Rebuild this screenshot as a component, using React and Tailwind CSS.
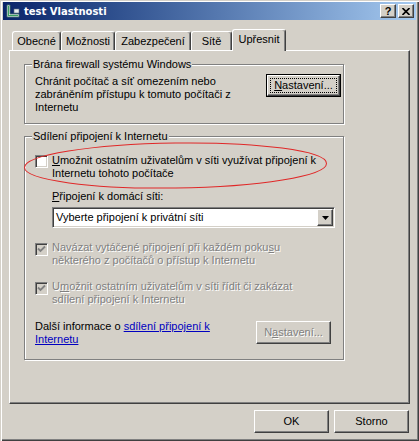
import React from 'react';

const raised =
  'border border-t-white border-l-white border-r-[#404040] border-b-[#404040] shadow-[inset_-1px_-1px_0_#808080]';
const sunken =
  'border border-t-[#808080] border-l-[#808080] border-r-white border-b-white shadow-[inset_1px_1px_0_#404040,inset_-1px_-1px_0_#d4d0c8]';
const dim = 'text-[#808080] [text-shadow:1px_1px_0_#fff]';

const Tab = ({ label, width, active }) => (
  <div
    className={`flex items-center justify-center rounded-t-[3px] border-l border-t border-white border-r border-r-[#404040] shadow-[inset_-1px_0_0_#808080] bg-[#d4d0c8] ${
      active ? 'relative z-10 h-[22px] pb-[2px]' : 'h-[19px] mb-[1px]'
    }`}
    style={{ width }}
  >
    {label}
  </div>
);

const Check = ({ checked, disabled }) => (
  <div
    className={`w-[13px] h-[13px] shrink-0 flex items-center justify-center ${sunken} ${
      disabled ? 'bg-[#d4d0c8]' : 'bg-white'
    }`}
  >
    {checked && (
      <svg width="9" height="9" viewBox="0 0 9 9">
        <path d="M1 3.5 L3.5 6 L8 1.5" fill="none" stroke="#808080" strokeWidth="1.8" />
      </svg>
    )}
  </div>
);

const Button = ({ children, disabled, isDefault, className = '' }) => {
  if (isDefault) {
    return (
      <div className={`w-[75px] h-[23px] border border-black ${className}`}>
        <div className={`w-full h-full p-[2px] ${raised}`}>
          <div className="w-full h-full border border-dotted border-black flex items-center justify-center">
            {children}
          </div>
        </div>
      </div>
    );
  }
  return (
    <div
      className={`w-[75px] h-[23px] flex items-center justify-center ${raised} ${
        disabled ? dim : ''
      } ${className}`}
    >
      {children}
    </div>
  );
};

const Group = ({ title, className = '', children }) => (
  <div
    className={`relative border border-[#808080] shadow-[inset_1px_1px_0_#fff,1px_1px_0_#fff] ${className}`}
  >
    <span className="absolute -top-[7px] left-[7px] bg-[#d4d0c8] px-[1px]">{title}</span>
    {children}
  </div>
);

export default function App() {
  return (
    <div className="relative w-[419px] h-[441px] overflow-hidden bg-[#d4d0c8] text-black text-[11px] leading-[13px] font-['Liberation_Sans',Arial,sans-serif] shadow-[inset_1px_1px_0_#d4d0c8,inset_2px_2px_0_#fff,inset_-1px_-1px_0_#404040,inset_-2px_-2px_0_#808080] flex flex-col">
      {/* title bar */}
      <div className="mt-[2px] ml-[3px] w-[413px] h-[18px] flex items-center bg-gradient-to-r from-[#0a246a] to-[#a6caf0]">
        <svg width="16" height="16" viewBox="0 0 16 16" className="ml-[2px]">
          <path d="M2 2 L5 2 L5 11 L14 11 L14 14 L2 14 Z" fill="#d8e4e4" stroke="#4a7a6a" strokeWidth="0.8" />
          <path d="M3 3 L4 3 L4 12 L13 12 L13 13 L3 13 Z" fill="#3aa060" />
          <rect x="9" y="6" width="5" height="4" fill="#e8eef0" stroke="#5a6a80" strokeWidth="0.6" />
        </svg>
        <span className="ml-[3px] text-white font-bold text-[10px] font-['DejaVu_Sans',sans-serif]">
          test Vlastnosti
        </span>
        <div className="ml-auto mr-[2px] flex gap-[2px]">
          <div className={`w-[16px] h-[14px] bg-[#d4d0c8] flex items-center justify-center font-bold text-[11px] leading-none ${raised}`}>
            ?
          </div>
          <div className={`w-[16px] h-[14px] bg-[#d4d0c8] flex items-center justify-center ${raised}`}>
            <svg width="8" height="7" viewBox="0 0 8 7">
              <path d="M0.5 0 L7.5 7 M7.5 0 L0.5 7" stroke="#000" strokeWidth="1.6" />
            </svg>
          </div>
        </div>
      </div>

      {/* tabs */}
      <div className="mt-[9px] ml-[12px] h-[22px] -mb-[1px] flex items-end">
        <Tab label="Obecné" width={49} />
        <Tab label="Možnosti" width={54} />
        <Tab label="Zabezpečení" width={76} />
        <Tab label="Sítě" width={41} />
        <Tab label="Upřesnit" width={54} active />
      </div>

      {/* tab panel */}
      <div className="ml-[9px] w-[401px] h-[354px] border-l border-t border-white border-r border-b border-r-[#404040] border-b-[#404040] shadow-[inset_-1px_-1px_0_#808080] px-[14px] pt-[13px]">
        <Group title="Brána firewall systému Windows" className="w-[320px] h-[60px] flex justify-between items-start pl-[10px] pr-[2px] pt-[10px]">
          <div className="whitespace-nowrap">
            Chránit počítač a síť omezením nebo
            <br />
            zabráněním přístupu k tomuto počítači z
            <br />
            Internetu
          </div>
          <Button isDefault className="-mt-[1px]">
            <span>
              <u>N</u>astavení...
            </span>
          </Button>
        </Group>

        <Group title="Sdílení připojení k Internetu" className="mt-[12px] w-[320px] h-[224px] pl-[10px] pt-[17px]">
          <div className="flex items-start gap-[4px]">
            <div className="mt-[1px]">
              <Check />
            </div>
            <div className="whitespace-nowrap">
              <u>U</u>možnit ostatním uživatelům v síti využívat připojení k
              <br />
              Internetu tohoto počítače
            </div>
          </div>

          <div className="ml-[17px] mt-[10px]">
            <u>P</u>řipojení k domácí síti:
          </div>
          <div className={`ml-[17px] mt-[4px] w-[283px] h-[21px] bg-white flex items-center ${sunken}`}>
            <span className="pl-[3px] flex-1">Vyberte připojení k privátní síti</span>
            <div className={`w-[16px] h-[17px] mr-[1px] bg-[#d4d0c8] flex items-center justify-center ${raised}`}>
              <svg width="7" height="4" viewBox="0 0 7 4">
                <path d="M0 0 L7 0 L3.5 4 Z" fill="#000" />
              </svg>
            </div>
          </div>

          <div className="mt-[13px] flex items-start gap-[4px]">
            <div className="mt-[2px]">
              <Check checked disabled />
            </div>
            <div className={`whitespace-nowrap ${dim}`}>
              Navázat vytáčené připojení při každém poku<u>s</u>u
              <br />
              některého z počítačů o přístup k Internetu
            </div>
          </div>

          <div className="mt-[13px] flex items-start gap-[4px]">
            <div className="mt-[2px]">
              <Check checked disabled />
            </div>
            <div className={`whitespace-nowrap ${dim}`}>
              U<u>m</u>ožnit ostatním uživatelům v síti řídit či zakázat
              <br />
              sdílení připojení k Internetu
            </div>
          </div>

          <div className="mt-[14px] flex items-start justify-between pr-[12px]">
            <div className="whitespace-nowrap">
              Další informace o{' '}
              <span className="text-[#0000c0] underline">sdílení připojení k</span>
              <br />
              <span className="text-[#0000c0] underline">Internetu</span>
            </div>
            <Button disabled className="mt-[1px]">
              <span>
                N<u>a</u>stavení...
              </span>
            </Button>
          </div>
        </Group>
      </div>

      {/* dialog buttons */}
      <div className="mt-[6px] pr-[10px] flex justify-end gap-[5px]">
        <Button>OK</Button>
        <Button>Storno</Button>
      </div>

      {/* red annotation ellipse */}
      <svg className="absolute left-0 top-0 pointer-events-none" width="419" height="441">
        <ellipse
          cx="175.5"
          cy="165.5"
          rx="151"
          ry="22.5"
          fill="none"
          stroke="#e02828"
          strokeWidth="1"
          transform="rotate(-0.8 175.5 165.5)"
        />
      </svg>
    </div>
  );
}
